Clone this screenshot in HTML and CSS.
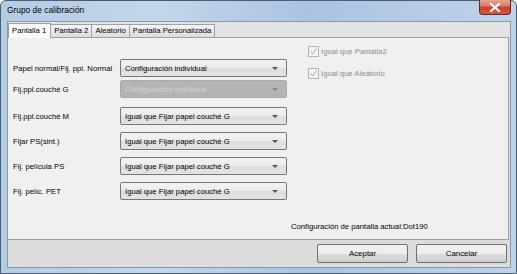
FILE: index.html
```html
<!DOCTYPE html>
<html lang="es">
<head>
<meta charset="utf-8">
<title>Grupo de calibración</title>
<link rel="stylesheet" href="styles.css">
</head>
<body>
<div class="window">
  <div class="titlebar">
    <span class="title">Grupo de calibración</span>
    <div class="close">
      <svg width="12" height="9" viewBox="0 0 12 9"><path d="M2 1 L10 8 M10 1 L2 8" stroke="#fff" stroke-width="2.2" stroke-linecap="square"/></svg>
    </div>
  </div>
  <div class="client">
    <div class="tabs">
      <div class="tab active">Pantalla 1</div>
      <div class="tab">Pantalla 2</div>
      <div class="tab">Aleatorio</div>
      <div class="tab">Pantalla Personalizada</div>
    </div>
    <div class="panel">
      <div class="rows">
        <div class="row">
          <span class="label">Papel normal/Fij. ppl. Normal</span>
          <div class="select"><span>Configuración individual</span><i class="arrow"></i></div>
        </div>
        <div class="row r2">
          <span class="label">Fij.ppl.couché G</span>
          <div class="select disabled"><span>Configuración individual</span><i class="arrow"></i></div>
        </div>
        <div class="row r3">
          <span class="label">Fij.ppl.couché M</span>
          <div class="select"><span>Igual que Fijar papel couché G</span><i class="arrow"></i></div>
        </div>
        <div class="row">
          <span class="label">Fijar PS(sint.)</span>
          <div class="select"><span>Igual que Fijar papel couché G</span><i class="arrow"></i></div>
        </div>
        <div class="row">
          <span class="label">Fij. película PS</span>
          <div class="select"><span>Igual que Fijar papel couché G</span><i class="arrow"></i></div>
        </div>
        <div class="row">
          <span class="label">Fij. pelíc. PET</span>
          <div class="select"><span>Igual que Fijar papel couché G</span><i class="arrow"></i></div>
        </div>
      </div>
      <div class="side">
        <label class="check"><span class="box"><svg width="9" height="9" viewBox="0 0 9 9"><path d="M1.5 4.5 L3.5 7 L7.5 1.5" fill="none" stroke="#a8a8a8" stroke-width="1"/></svg></span>Igual que Pantalla2</label>
        <label class="check"><span class="box"><svg width="9" height="9" viewBox="0 0 9 9"><path d="M1.5 4.5 L3.5 7 L7.5 1.5" fill="none" stroke="#a8a8a8" stroke-width="1"/></svg></span>Igual que Aleatorio</label>
        <div class="status">Configuración de pantalla actual:Dot190</div>
      </div>
    </div>
    <div class="footer">
      <div class="btn">Aceptar</div>
      <div class="btn">Cancelar</div>
    </div>
  </div>
</div>
</body>
</html>
```
FILE: styles.css
```css
html, body {
  margin: 0;
  padding: 0;
  width: 517px;
  height: 274px;
  overflow: hidden;
  background: #ffffff;
}
.window {
  box-sizing: border-box;
  width: 517px;
  height: 274px;
  border: 1px solid #4b5d74;
  border-radius: 6px 6px 0 0;
  background: linear-gradient(90deg, #b4cbe4 0%, #c3d6eb 30%, #aac4e0 60%, #bed3ea 100%);
  display: flex;
  flex-direction: column;
  font-family: "Liberation Sans", Arial, sans-serif;
  font-size: 7.7px;
  color: #000;
}
.titlebar {
  height: 20px;
  display: flex;
  align-items: flex-start;
  justify-content: space-between;
  padding: 0 5px 0 6px;
}
.title {
  font-size: 8.4px;
  margin-top: 4px;
  color: #000;
}
.close {
  width: 32px;
  height: 15px;
  margin-top: -1px;
  box-sizing: border-box;
  border: 1px solid #6a2a20;
  border-top: none;
  border-radius: 0 0 4px 4px;
  background: linear-gradient(180deg, #e9a493 0%, #dc7a66 40%, #c7412a 55%, #d65a3f 100%);
  display: flex;
  align-items: center;
  justify-content: center;
}
.client {
  flex: 1;
  margin: 0 5px 5px 6px;
  background: #dcdcdc;
  border: 1px solid #8a9bb0;
  display: flex;
  flex-direction: column;
}
.tabs {
  height: 15px;
  display: flex;
  align-items: flex-end;
  background: #e3e3e3;
  position: relative;
  z-index: 1;
}
.tab {
  height: 12px;
  line-height: 12px;
  padding: 0 3px;
  border: 1px solid #a0a0a0;
  border-bottom: none;
  margin-right: -1px;
  background: linear-gradient(180deg, #f4f4f4 0%, #e9e9e9 50%, #dcdcdc 100%);
  color: #000;
}
.tab.active {
  height: 14px;
  line-height: 13px;
  background: #fbfbfb;
  margin-bottom: -1px;
  padding: 0 4px 0 3px;
  position: relative;
  z-index: 2;
}
.panel {
  height: 203px;
  box-sizing: border-box;
  background: #f0f0f0;
  border: 1px solid #a0a0a0;
  border-left: none;
  margin-right: 1px;
  display: flex;
  padding: 21px 0 0 5px;
}
.rows {
  display: flex;
  flex-direction: column;
  gap: 7px;
  width: 278px;
}
.row {
  display: flex;
  align-items: center;
  height: 18px;
}
.row.r2 { margin-top: -4px; }
.row.r3 { margin-top: 2px; }
.label {
  width: 107px;
  white-space: nowrap;
}
.select {
  box-sizing: border-box;
  width: 167px;
  height: 18px;
  border: 1px solid #767676;
  border-radius: 2px;
  background: linear-gradient(180deg, #f3f3f3 0%, #ebebeb 50%, #dddddd 51%, #e3e3e3 100%);
  display: flex;
  align-items: center;
  justify-content: space-between;
  padding: 0 8px 0 4px;
}
.select.disabled {
  background: #b4b4b4;
  border-color: #a8a8a8;
  color: #d2d2d2;
}
.arrow {
  width: 0;
  height: 0;
  border-left: 3px solid transparent;
  border-right: 3px solid transparent;
  border-top: 3px solid #555;
}
.select.disabled .arrow { border-top-color: #8a8a8a; }
.side {
  flex: 1;
  display: flex;
  flex-direction: column;
  margin-top: -14px;
}
.check {
  display: flex;
  align-items: center;
  height: 12px;
  margin-bottom: 10px;
  color: #8d8d8d;
  margin-left: 17px;
}
.box {
  box-sizing: border-box;
  width: 11px;
  height: 11px;
  border: 1px solid #b5b5b5;
  background: #f4f4f4;
  display: flex;
  align-items: center;
  justify-content: center;
  margin-right: 2px;
}
.status {
  margin-top: auto;
  margin-bottom: 8px;
}
.footer {
  flex: 1;
  display: flex;
  justify-content: flex-end;
  align-items: flex-start;
  gap: 8px;
  padding: 4px 3px 0 0;
  background: #dcdcdc;
}
.btn {
  box-sizing: border-box;
  width: 91px;
  height: 19px;
  border: 1px solid #707070;
  border-radius: 2px;
  background: linear-gradient(180deg, #f2f2f2 0%, #ebebeb 50%, #dddddd 51%, #cfcfcf 100%);
  display: flex;
  align-items: center;
  justify-content: center;
  font-size: 7.9px;
}
```
